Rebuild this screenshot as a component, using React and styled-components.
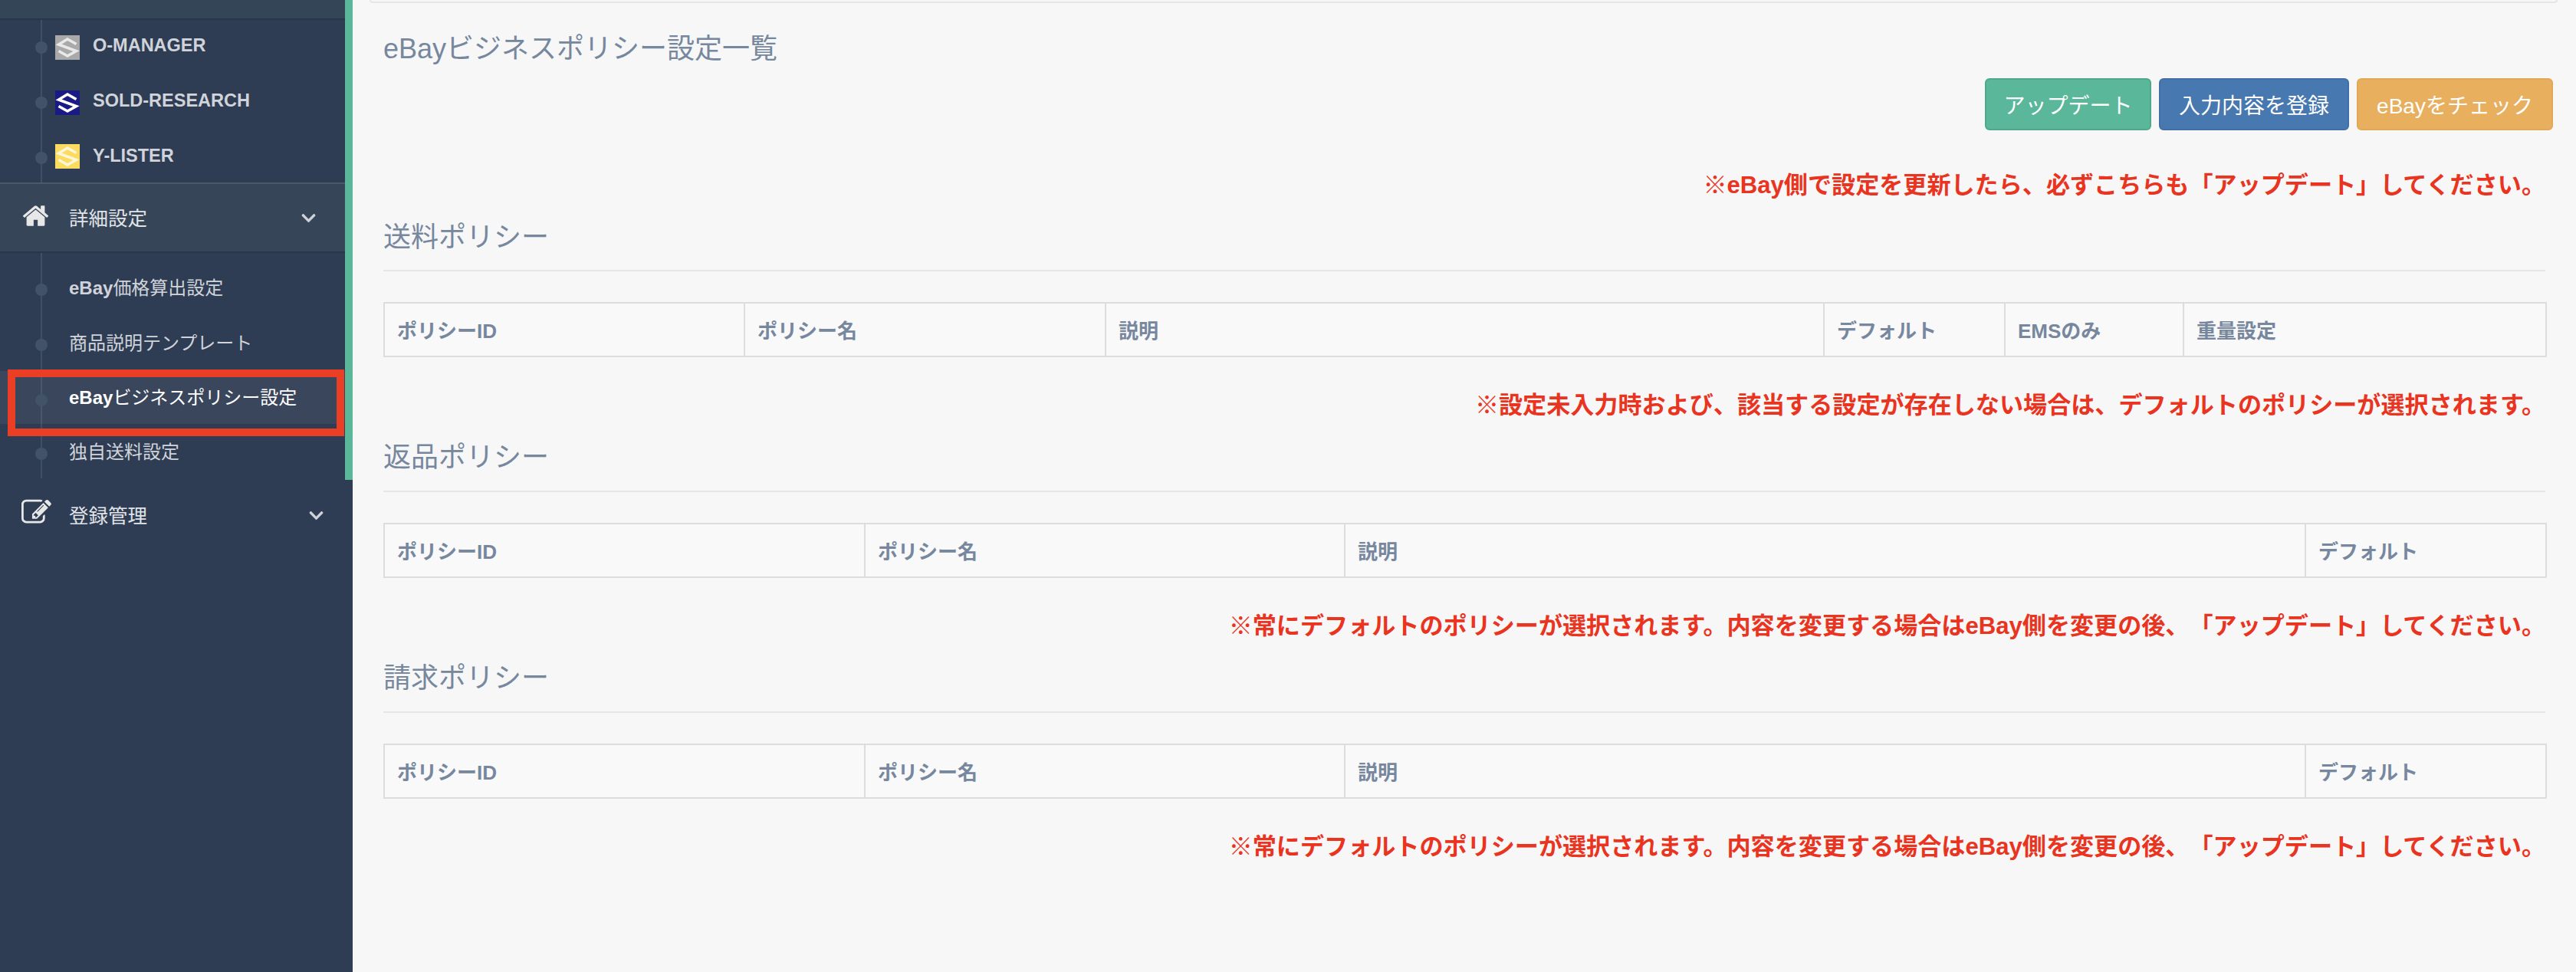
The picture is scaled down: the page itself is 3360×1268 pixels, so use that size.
import styled, { createGlobalStyle } from 'styled-components';
import { FaChevronDown } from 'react-icons/fa';

const GlobalStyle = createGlobalStyle`
  html, body {
    margin: 0;
    padding: 0;
    background: #f7f7f7;
    font-family: "Liberation Sans", "Noto Sans CJK JP", sans-serif;
    text-spacing-trim: space-all;
  }
  * { box-sizing: border-box; }
`;

const Page = styled.div`
  width: 3360px;
  height: 1268px;
  display: flex;
  overflow: hidden;
  background: #f7f7f7;
  position: relative;
`;

const Sidebar = styled.aside`
  width: 460px;
  flex: none;
  background: #2f3d54;
`;

const MenuColumn = styled.div`
  height: 626px;
  border-right: 10px solid #5ab79a;
`;

const TopStrip = styled.div`
  height: 26px;
  background: #344558;
  border-bottom: 2px solid #283648;
`;

const SubMenu = styled.ul`
  list-style: none;
  margin: 0;
  padding: 0;
  position: relative;

  &::before {
    content: '';
    position: absolute;
    left: 53px;
    top: 0;
    bottom: 0;
    width: 2px;
    background: #3f4f64;
  }
`;

const SubItem = styled.li`
  height: ${(p) => p.$h}px;
  display: flex;
  align-items: center;
  gap: 17px;
  padding: ${(p) => p.$pt || 0}px 0 ${(p) => p.$pb || 0}px ${(p) => (p.$logo ? 72 : 90)}px;
  position: relative;
  font-size: 24px;
  color: ${(p) => (p.$active ? '#ffffff' : '#d0d4da')};
  background: ${(p) => (p.$active ? 'rgba(255, 255, 255, 0.05)' : 'transparent')};

  &::before {
    content: '';
    position: absolute;
    left: 46px;
    top: ${(p) => p.$dot - 8}px;
    width: 16px;
    height: 16px;
    border-radius: 50%;
    background: #425367;
  }
`;

const LatinBold = styled.span`
  font-weight: 700;
`;

const ToolName = styled.span`
  font-weight: 700;
  font-size: 23.500px;
  margin-bottom: ${(p) => p.$lift || 6}px;
`;

const LogoBox = styled.svg`
  width: 32px;
  height: 32px;
  flex: none;
  display: block;
`;

const LogoMark = styled.path`
  fill: none;
  stroke: #fff;
  stroke-width: 3.500;
  opacity: ${(p) => (p.$soft ? 0.75 : 1)};
  filter: ${(p) => (p.$soft ? 'blur(0.6px)' : 'none')};
`;

const MenuHead = styled.div`
  height: ${(p) => p.$h}px;
  display: flex;
  align-items: center;
  padding: 0 37px 0 28px;
  font-size: 25.500px;
  color: #e0e3e7;
  background: ${(p) => (p.$open ? '#364557' : 'transparent')};
  border-top: ${(p) => (p.$open ? '2px solid #4b596b' : '0')};
  border-bottom: ${(p) => (p.$open ? '2px solid #283648' : '0')};
`;

const HeadIcon = styled.svg`
  width: ${(p) => p.$size}px;
  height: ${(p) => p.$size}px;
  margin: 0 ${(p) => 62 - p.$size}px ${(p) => p.$lift}px 0;
  flex: none;
  fill: #e7e7e7;
`;

const HeadLabel = styled.span`
  flex: 1;
  margin-bottom: 3px;
`;

const Chevron = styled(FaChevronDown)`
  width: 21px;
  height: 21px;
  color: #cdd2d9;
`;

const Main = styled.main`
  flex: 1;
  min-width: 0;
  padding: 0 40px;
`;

const TopCard = styled.div`
  height: 4px;
  margin: 0 -16px 0 -18px;
  border: 2px solid #e6e6e6;
  border-top: 0;
  border-radius: 0 0 6px 6px;
`;

const Title = styled.h3`
  margin: 0;
  padding-top: 38px;
  font-size: 36px;
  line-height: 44px;
  font-weight: 400;
  color: #76879e;
`;

const Toolbar = styled.div`
  display: flex;
  justify-content: flex-end;
  gap: 10px;
  margin: 16px -10px 0 0;
`;

const Btn = styled.button`
  height: 68px;
  width: ${(p) => p.$w}px;
  padding: 0;
  border-radius: 6px;
  border: 2px solid ${(p) => p.$line};
  background: ${(p) => p.$bg};
  color: #fff;
  font: inherit;
  font-size: 28px;
`;

const Note = styled.p`
  margin: ${(p) => p.$mt}px 0 0;
  height: 44px;
  line-height: 44px;
  text-align: right;
  font-size: 31.100px;
  font-weight: 700;
  color: #e9341f;
`;

const SectionHead = styled.h4`
  margin: ${(p) => p.$mt}px 0 0;
  height: ${(p) => p.$h}px;
  padding-top: 2px;
  font-size: 36px;
  line-height: 44px;
  font-weight: 400;
  color: #76879e;
  border-bottom: 2px solid #e6e6e6;
`;

const Table = styled.table`
  width: 100%;
  table-layout: fixed;
  border-collapse: collapse;
  margin-top: 40px;
  background: #f9f9f9;
`;

const Th = styled.th`
  width: ${(p) => p.$w}px;
  height: 70px;
  padding: 0 16px 2px;
  border: 2px solid #dddddd;
  text-align: left;
  font-size: 26px;
  font-weight: 700;
  color: #76879e;
`;

const Marker = styled.div`
  position: absolute;
  left: 10px;
  top: 482px;
  width: 439px;
  height: 87px;
  border: 10px solid #ea3f25;
  pointer-events: none;
`;

const SLogo = ({ bg, soft }) => (
  <LogoBox viewBox="0 0 32 32" aria-hidden="true">
    <rect width="32" height="32" fill={bg} />
    <LogoMark $soft={soft} d="M27.500 11.500 16 5 4.500 12 27.500 20.500 16 27 4.500 20.500" />
  </LogoBox>
);

const shippingCols = [
  ['ポリシーID', 470],
  ['ポリシー名', 471],
  ['説明', 937],
  ['デフォルト', 236],
  ['EMSのみ', 233],
  ['重量設定', 473],
];

const policyCols = [
  ['ポリシーID', 627],
  ['ポリシー名', 626],
  ['説明', 1253],
  ['デフォルト', 314],
];

const UPDATE_NOTE = '※常にデフォルトのポリシーが選択されます。内容を変更する場合はeBay側を変更の後、「アップデート」してください。';

const PolicyTable = ({ cols }) => (
  <Table>
    <thead>
      <tr>
        {cols.map(([label, w]) => (
          <Th key={label} $w={w}>{label}</Th>
        ))}
      </tr>
    </thead>
  </Table>
);

const App = () => {
  return (
    <Page>
      <GlobalStyle />
      <Sidebar>
        <MenuColumn>
          <TopStrip />
          <SubMenu>
            <SubItem $logo $h={72} $dot={36}>
              <SLogo bg="#a9a9a9" soft />
              <ToolName>O-MANAGER</ToolName>
            </SubItem>
            <SubItem $logo $h={72} $dot={36}>
              <SLogo bg="#1a1a85" />
              <ToolName>SOLD-RESEARCH</ToolName>
            </SubItem>
            <SubItem $logo $h={68} $dot={36}>
              <SLogo bg="#fbdb60" soft />
              <ToolName $lift={2}>Y-LISTER</ToolName>
            </SubItem>
          </SubMenu>
          <MenuHead $open $h={92}>
            <HeadIcon $size={37} $lift={5} viewBox="0 0 1792 1792" aria-hidden="true">
              <path d="M1472 992v480q0 26-19 45t-45 19h-384v-384h-256v384h-384q-26 0-45-19t-19-45v-480q0-1 .5-3t.5-3l575-474 575 474q1 2 1 6zm223-69l-62 74q-8 9-21 11h-3q-13 0-21-7l-692-577-692 577q-12 8-24 7-13-2-21-11l-62-74q-8-10-7-23.500t11-21.500l719-599q32-26 76-26t76 26l244 204v-195q0-14 9-23t23-9h192q14 0 23 9t9 23v408l219 182q10 8 11 21.500t-7 23.500z" />
            </HeadIcon>
            <HeadLabel>詳細設定</HeadLabel>
            <Chevron />
          </MenuHead>
          <SubMenu>
            <SubItem $h={84} $pb={10} $pt={12} $dot={48}>
              <span><LatinBold>eBay</LatinBold>価格算出設定</span>
            </SubItem>
            <SubItem $h={70} $pb={8} $dot={36}>商品説明テンプレート</SubItem>
            <SubItem $active $h={69} $pb={4} $dot={38}>
              <span><LatinBold>eBay</LatinBold>ビジネスポリシー設定</span>
            </SubItem>
            <SubItem $h={71} $pb={3} $dot={39}>独自送料設定</SubItem>
          </SubMenu>
        </MenuColumn>
        <MenuHead $h={92}>
          <HeadIcon $size={39} $lift={7} viewBox="0 0 1792 1792" aria-hidden="true">
            <path d="M888 1184l116-116-152-152-116 116v56h96v96h56zm440-720q-16-16-33 1l-350 350q-17 17-1 33t33-1l350-350q17-17 1-33zm80 594v190q0 119-84.500 203.500t-203.500 84.500h-832q-119 0-203.500-84.500t-84.500-203.500v-832q0-119 84.500-203.500t203.500-84.500h832q63 0 117 25 15 7 18 23 3 17-9 29l-49 49q-14 14-32 8-23-6-45-6h-832q-66 0-113 47t-47 113v832q0 66 47 113t113 47h832q66 0 113-47t47-113v-126q0-13 9-22l64-64q15-15 35-7t20 29zm-96-738l288 288-672 672h-288v-288zm444 132l-92 92-288-288 92-92q28-28 68-28t68 28l152 152q28 28 28 68t-28 68z" />
          </HeadIcon>
          <HeadLabel>登録管理</HeadLabel>
          <Chevron />
        </MenuHead>
      </Sidebar>
      <Main>
        <TopCard />
        <Title>eBayビジネスポリシー設定一覧</Title>
        <Toolbar>
          <Btn $w={217} $bg="#5ab79a" $line="#4fa88c">アップデート</Btn>
          <Btn $w={248} $bg="#4878b0" $line="#4270a6">入力内容を登録</Btn>
          <Btn $w={256} $bg="#e7af5e" $line="#e3a856">eBayをチェック</Btn>
        </Toolbar>
        <Note $mt={50}>※eBay側で設定を更新したら、必ずこちらも「アップデート」してください。</Note>
        <SectionHead $mt={22} $h={68}>送料ポリシー</SectionHead>
        <PolicyTable cols={shippingCols} />
        <Note $mt={41}>※設定未入力時および、該当する設定が存在しない場合は、デフォルトのポリシーが選択されます。</Note>
        <SectionHead $mt={22} $h={69}>返品ポリシー</SectionHead>
        <PolicyTable cols={policyCols} />
        <Note $mt={41}>{UPDATE_NOTE}</Note>
        <SectionHead $mt={22} $h={69}>請求ポリシー</SectionHead>
        <PolicyTable cols={policyCols} />
        <Note $mt={41}>{UPDATE_NOTE}</Note>
      </Main>
      <Marker />
    </Page>
  );
};

export default App;
